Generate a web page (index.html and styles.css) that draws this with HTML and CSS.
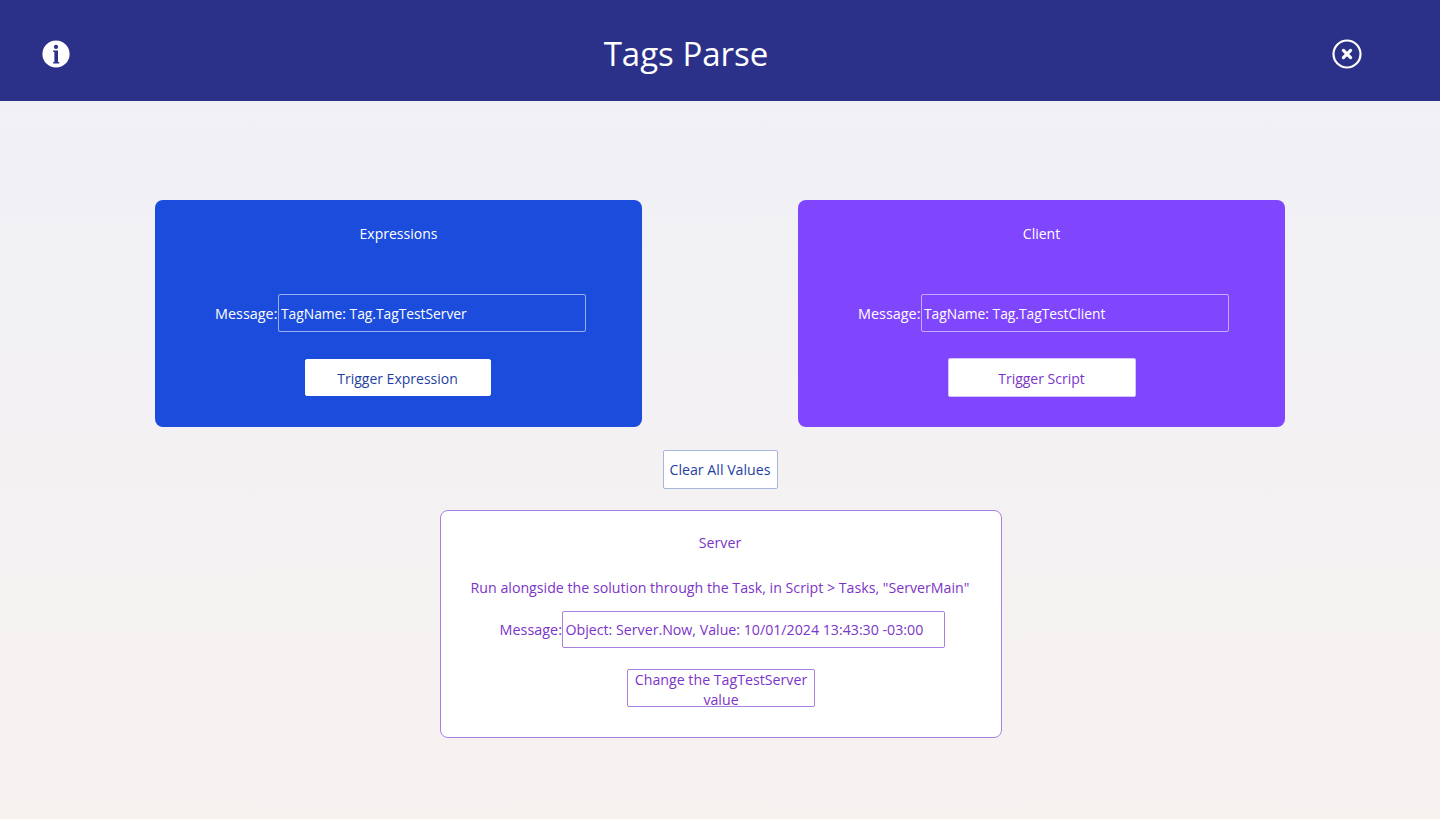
FILE: index.html
```html
<!DOCTYPE html>
<html lang="en">
<head>
<meta charset="utf-8">
<title>Tags Parse</title>
<link rel="stylesheet" href="styles.css">
</head>
<body>
<header class="header">
  <svg class="icon-info" viewBox="0 0 28 28" width="28" height="28" aria-hidden="true">
    <circle cx="14" cy="14" r="13.6" fill="#fff"/>
    <circle cx="14" cy="6.9" r="2.1" fill="#2b3189"/>
    <path d="M11.2 10.6h4.8v11.4h1.2v1.5h-6v-1.5h1.2v-9.9h-1.2z" fill="#2b3189"/>
  </svg>
  <h1 class="title">Tags Parse</h1>
  <svg class="icon-close" viewBox="0 0 30 30" width="30" height="30" aria-hidden="true">
    <circle cx="15" cy="15" r="13.5" fill="none" stroke="#fff" stroke-width="2.2"/>
    <path d="M11.4 11.4l7.2 7.2M18.6 11.4l-7.2 7.2" stroke="#fff" stroke-width="3.2" stroke-linecap="round"/>
  </svg>
</header>
<main class="main">
  <section class="cards">
    <div class="card card-blue">
      <div class="card-title">Expressions</div>
      <div class="field">
        <label class="field-label">Message:</label>
        <div class="field-box field-box-wide">TagName: Tag.TagTestServer</div>
      </div>
      <button class="btn btn-blue">Trigger Expression</button>
    </div>
    <div class="card card-purple">
      <div class="card-title">Client</div>
      <div class="field">
        <label class="field-label">Message:</label>
        <div class="field-box field-box-wide">TagName: Tag.TagTestClient</div>
      </div>
      <button class="btn btn-purple">Trigger Script</button>
    </div>
  </section>
  <button class="btn-clear">Clear All Values</button>
  <section class="server">
    <div class="server-title">Server</div>
    <div class="server-note">Run alongside the solution through the Task, in Script &gt; Tasks, "ServerMain"</div>
    <div class="field server-field">
      <label class="field-label">Message:</label>
      <div class="field-box field-box-server">Object: Server.Now, Value: 10/01/2024 13:43:30 -03:00</div>
    </div>
    <button class="btn-change">Change the TagTestServer value</button>
  </section>
</main>
</body>
</html>
```
FILE: styles.css
```css
* { box-sizing: border-box; }
html, body { margin: 0; height: 100%; }
body {
  font-family: "Open Sans", "Noto Sans", sans-serif;
  font-size: 14px;
  background: linear-gradient(#eff0f6, #f7f2f0);
  color: #7b35c8;
  overflow: hidden;
}
.header {
  height: 101px;
  background: #2b3189;
  display: flex;
  align-items: center;
  justify-content: space-between;
  padding: 6px 78px 0 42px;
}
.title {
  margin: 0;
  font-size: 33px;
  font-weight: 400;
  color: #fff;
  position: relative;
  left: -15px;
}
.main {
  padding-top: 99px;
  display: flex;
  flex-direction: column;
  align-items: center;
}
.cards {
  width: 100%;
  padding: 0 155px;
  display: flex;
  justify-content: space-between;
}
.card {
  width: 487px;
  height: 227px;
  border-radius: 8px;
  padding-top: 24px;
  color: #fff;
  display: flex;
  flex-direction: column;
  align-items: center;
}
.card-blue { background: #1b4cdb; }
.card-purple { background: #7f46fe; }
.card-purple .field { margin-left: 4px; }
.card-title { line-height: 20px; }
.field {
  display: flex;
  align-items: center;
  height: 38px;
  margin: 50px 0 0 4px;
}
.field-label { width: 63px; font-size: 14.4px; white-space: nowrap; }
.field-box {
  height: 38px;
  border: 1px solid rgba(255,255,255,.55);
  border-radius: 2px;
  padding: 0 2px;
  line-height: 37px;
  white-space: nowrap;
}
.field-box-wide { width: 308px; font-size: 13.8px; }
.btn {
  font: inherit;
  border-radius: 2px;
  background: #fff;
  padding: 0;
}
.btn-blue {
  width: 186px;
  height: 37px;
  margin: 27px 2px 0 0;
  border: 1px solid #fff;
  padding-top: 1px;
  color: #1f3f9f;
}
.btn-purple {
  width: 188px;
  height: 39px;
  margin-top: 26px;
  border: 1px solid #d9c3ff;
  padding-top: 1px;
  color: #7b35c8;
}
.btn-clear {
  width: 115px;
  height: 39px;
  margin-top: 23px;
  background: #fff;
  border: 1px solid #a9b6dc;
  border-radius: 2px;
  font-family: inherit;
  font-size: 14.2px;
  color: #1f3f9f;
  padding: 0;
}
.server {
  width: 562px;
  height: 228px;
  margin: 21px 0 0 2px;
  background: #fff;
  border: 1px solid #a97fe0;
  border-radius: 8px;
  padding-top: 22px;
  display: flex;
  flex-direction: column;
  align-items: center;
  font-size: 14.2px;
}
.server-title { line-height: 20px; margin-right: 2px; }
.server-note { line-height: 20px; margin: 25px 2px 0 0; white-space: nowrap; }
.server-field { height: 37px; margin: 13px 0 0 2px; }
.field-box-server {
  width: 383px;
  height: 37px;
  border-color: #a97fe0;
  color: #7b35c8;
  padding: 0 3px;
  font-size: 14.2px;
  line-height: 36px;
}
.server-field .field-label { width: 62px; }
.btn-change {
  width: 188px;
  height: 38px;
  margin-top: 21px;
  background: #fff;
  border: 1px solid #a97fe0;
  border-radius: 2px;
  font: inherit;
  line-height: 20px;
  color: #7b35c8;
  padding: 0 0 2px;
}
```
